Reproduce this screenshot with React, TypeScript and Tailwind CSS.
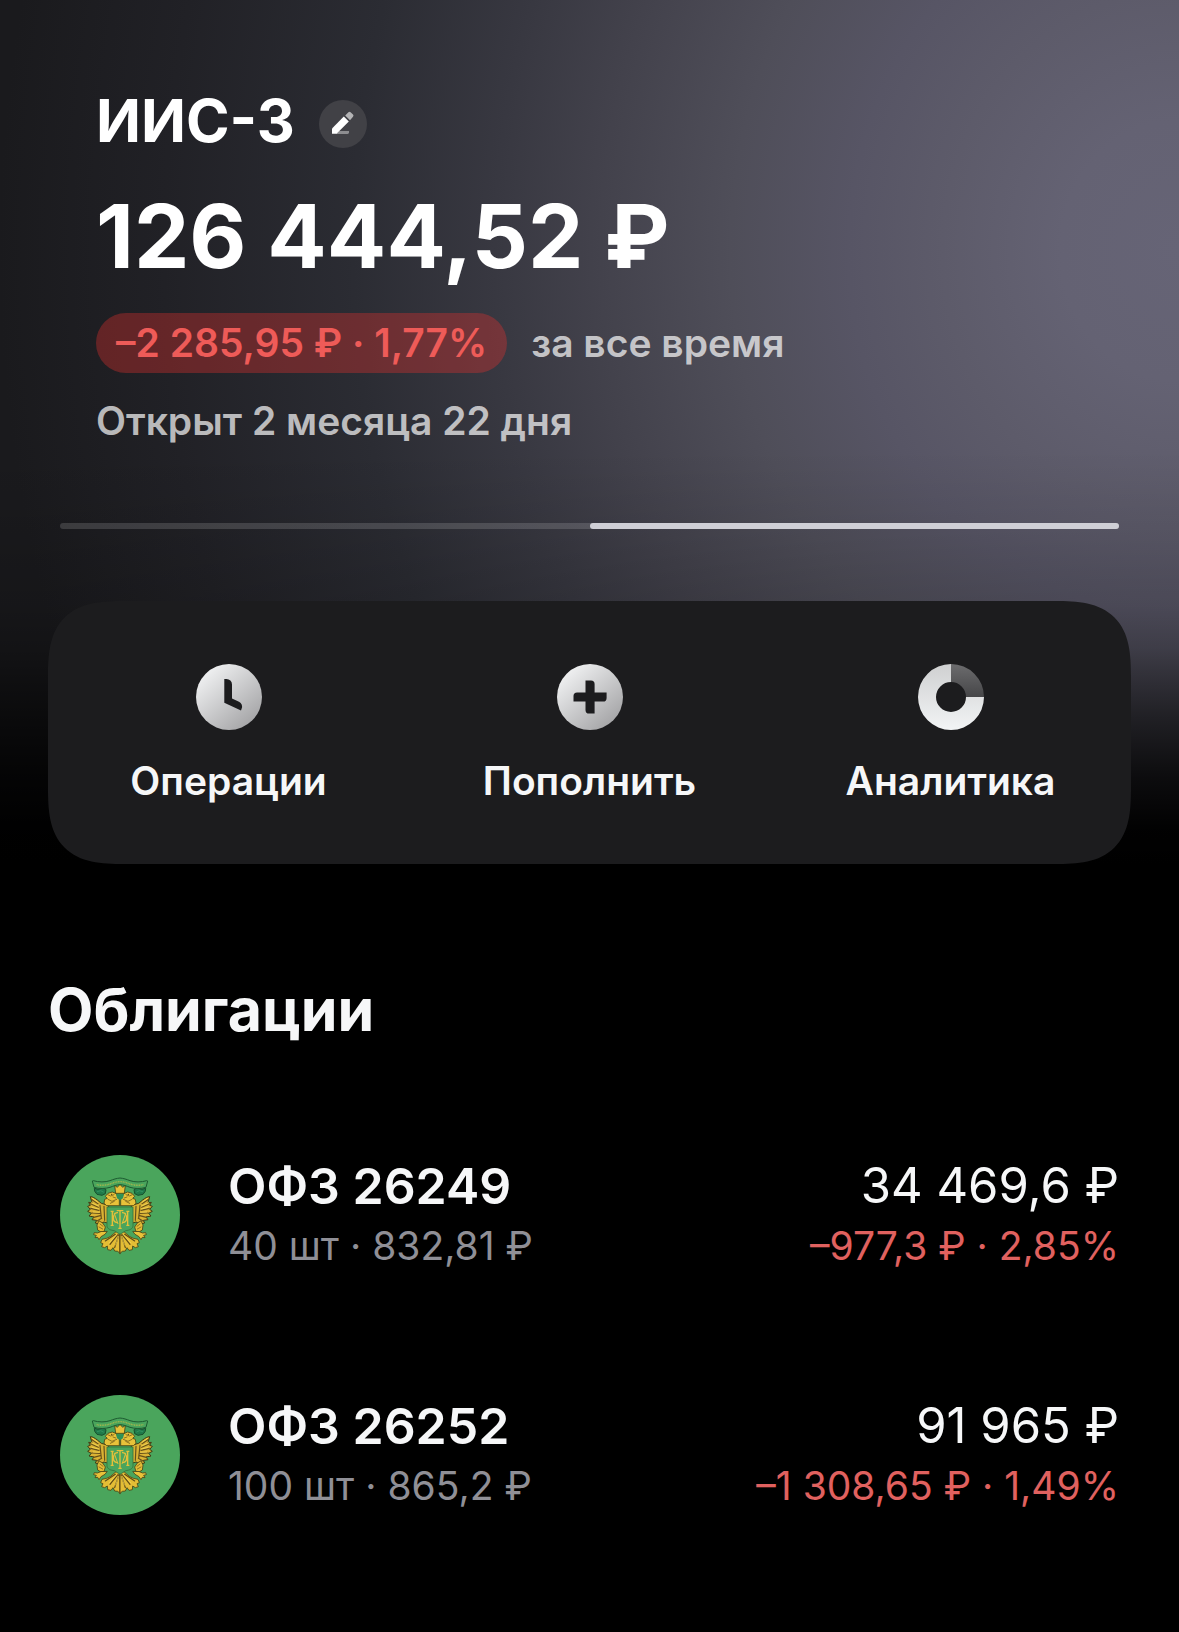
import { useId } from 'react';

type Bond = {
  name: string;
  position: string;
  total: string;
  change: string;
};

const bonds: Bond[] = [
  { name: 'ОФЗ 26249', position: '40 шт · 832,81 ₽', total: '34 469,6 ₽', change: '–977,3 ₽ · 2,85%' },
  { name: 'ОФЗ 26252', position: '100 шт · 865,2 ₽', total: '91 965 ₽', change: '–1 308,65 ₽ · 1,49%' },
];

function PencilIcon() {
  return (
    <svg viewBox="0 0 48 48" className="w-12 h-12" aria-hidden="true">
      <path d="M20 31h10v1.6a1.4 1.4 0 0 1-1.4 1.4H17z" fill="#fff" fillOpacity="0.4" />
      <path d="M24.8 16.6 29.8 21.6 17.6 33.8H13v-5.2z" fill="#fff" />
      <path d="M26.2 15.4 29.4 12.2a1.6 1.6 0 0 1 2.2 0l2.4 2.4a1.6 1.6 0 0 1 0 2.2L31 20.2z" fill="#fff" fillOpacity="0.6" />
    </svg>
  );
}

function ClockIcon() {
  const id = useId();
  return (
    <svg viewBox="0 0 66 66" className="w-16.5 h-16.5" aria-hidden="true">
      <defs>
        <linearGradient id={id} x1="0.15" y1="0.1" x2="0.85" y2="0.9">
          <stop offset="0" stopColor="#f0f1f2" />
          <stop offset="1" stopColor="#a5a5a7" />
        </linearGradient>
      </defs>
      <circle cx="33" cy="33" r="33" fill={`url(#${id})`} />
      <path d="M28.3 15h2.2a5.5 5.5 0 0 1 5.5 5.5v14l7 3.2a5.2 5.2 0 0 1 2.6 7L45 46.4l-16.7-7.6z" fill="#1c1c1e" />
    </svg>
  );
}

function PlusIcon() {
  const id = useId();
  return (
    <svg viewBox="0 0 66 66" className="w-16.5 h-16.5" aria-hidden="true">
      <defs>
        <linearGradient id={id} x1="0.15" y1="0.1" x2="0.85" y2="0.9">
          <stop offset="0" stopColor="#f0f1f2" />
          <stop offset="1" stopColor="#a5a5a7" />
        </linearGradient>
      </defs>
      <circle cx="33" cy="33" r="33" fill={`url(#${id})`} />
      <path
        d="M28.5 16.5h5.5a3.6 3.6 0 0 1 3.6 3.6v8.4h12v5.4a3.6 3.6 0 0 1-3.6 3.6h-8.4v12h-5.5a3.6 3.6 0 0 1-3.6-3.6v-8.4h-12v-5.4a3.6 3.6 0 0 1 3.6-3.6h8.4z"
        fill="#1c1c1e"
      />
    </svg>
  );
}

function ChartIcon() {
  const id = useId();
  return (
    <svg viewBox="0 0 66 66" className="w-16.5 h-16.5" aria-hidden="true">
      <defs>
        <linearGradient id={`${id}a`} x1="0" y1="0" x2="0" y2="1">
          <stop offset="0" stopColor="#cfd0d1" />
          <stop offset="1" stopColor="#f2f4f5" />
        </linearGradient>
        <linearGradient id={`${id}b`} x1="0" y1="0" x2="0" y2="1">
          <stop offset="0" stopColor="#6c6c6e" />
          <stop offset="1" stopColor="#464648" />
        </linearGradient>
      </defs>
      <path d="M33 0a33 33 0 1 0 33 33H48a15 15 0 1 1-15-15z" fill={`url(#${id}a)`} />
      <path d="M33 0a33 33 0 0 1 33 33H48a15 15 0 0 0-15-15z" fill={`url(#${id}b)`} />
    </svg>
  );
}

// Left half of the eagle, mirrored around x=210
function EagleHalf() {
  return (
    <g strokeLinejoin="round" strokeLinecap="round">
      <path d="M134 130l10 3 16-4 8 5-2 12-10 5-15-3-6-8z" fill="#1f7a4a" stroke="#174f2c" strokeWidth="3" />
      <path d="M142 140l10-3 8 4" fill="none" stroke="#3c9f6c" strokeWidth="2" />
      {/* wing */}
      <path
        d="M122 155c6 0 12 4 20 10l12 10 22 6v54l-14-4-14 6-12-3 4-8-14-2 6-8-15-3 7-8-11-6 8-6-8-9 8-3-5-9 9 1z"
        fill="#d9b233"
        stroke="#3f3a14"
        strokeWidth="3"
      />
      <path
        d="M124 163l20 13M121 176l24 11M122 190l25 6M125 204l24 1M131 217l20-5M141 228l14-8M150 181l4 38M162 184l2 42"
        fill="none"
        stroke="#66501a"
        strokeWidth="3.5"
      />
      <path d="M127 160l17 12M124 173l21 10M126 187l20 5M130 201l18 1" fill="none" stroke="#f2d655" strokeWidth="2.5" />
      {/* neck and head */}
      <path
        d="M208 182h-38l-8-7 2-12 8-3-6-6 8-9 13-4 12 5 4 8 5 6v20z"
        fill="#e8c23a"
        stroke="#4a4314"
        strokeWidth="2.5"
      />
      <path d="M173 149l9 4 10-4M174 163l12 6 14-6M181 175l12-6M189 156l8 3" fill="none" stroke="#77601b" strokeWidth="2.5" />
      <circle cx="185" cy="148" r="2" fill="#3b3513" />
      {/* leg and claw */}
      <path d="M148 228l10 6 8 12-4 14-9 1-10-6-2-14z" fill="#e3bd35" stroke="#4a4314" strokeWidth="2.5" />
      <path d="M150 237l9 7M147 246l11 6" fill="none" stroke="#80621a" strokeWidth="2.5" />
      <path d="M152 260l-10 4-9-1-2 6 8 2-4 7 8-1 4 7 6-9 12-7 6-8z" fill="#e8c23a" stroke="#4a4314" strokeWidth="2.5" />
      {/* tail */}
      <path
        d="M210 256l-14 6-14 12-12 6-14 3-4 10 7 3-4 9 9 3 8-5 1 11 10 2 6-8 5 10 9 1 7 6z"
        fill="#e3bd35"
        stroke="#4a4314"
        strokeWidth="2.5"
      />
      <path d="M204 268l-24 30M207 270l-13 38M196 268l-30 20" fill="none" stroke="#5e4a17" strokeWidth="3.5" />
      <path d="M201 268l-24 26M206 274l-9 26" fill="none" stroke="#f7dc5b" strokeWidth="2" />
    </g>
  );
}

function BondLogo() {
  return (
    <svg viewBox="30 30 360 360" className="w-30 h-30 shrink-0" aria-hidden="true">
      <circle cx="210" cy="210" r="180" fill="#4aa55c" />
      <EagleHalf />
      <g transform="matrix(-1 0 0 1 420 0)">
        <EagleHalf />
      </g>
      <path d="M210 262v62" stroke="#6e5618" strokeWidth="3" />
      {/* shield with the monogram */}
      <path d="M171 186h78v56c0 10-12 14-22 15l-17 11-17-11c-10-1-22-5-22-15z" fill="#4aa55c" stroke="#32753c" strokeWidth="2.5" />
      <g fill="none" stroke="#e3c03a" strokeWidth="4">
        <path d="M200 197h20M210 196v54M205 250h10" />
        <path d="M204 203c-16-2-20 28-2 30M216 203c16-2 20 28 2 30" />
        <path d="M187 199v41M182 199h9M182 241h9M233 199v41M229 199h9M229 241h9" strokeWidth="4" />
        <path d="M192 203l12 34M228 203l-12 34" strokeWidth="3" />
      </g>
      {/* crown and ribbon */}
      <path d="M194 121l8 6 8-9 8 9 8-6-3 24h-26z" fill="#e8c23a" stroke="#4a4314" strokeWidth="2.5" strokeLinejoin="round" />
      <path d="M198 148h24l-3 12-9 6-9-6z" fill="#2f9157" />
      <path
        d="M130 107c16 5 36 5 50 0 10-4 20-7 30-8 10 1 20 4 30 8 14 5 34 5 50 0l3 1-5 19c-16 5-34 4-48 0-11-4-20-8-30-8s-19 4-30 8c-14 4-32 5-48 0l-5-19z"
        fill="#4aa55c"
        stroke="#1c5a30"
        strokeWidth="3"
        strokeLinejoin="round"
      />
      <path d="M140 119c14 3 28 2 40-2 10-4 20-7 30-7s20 3 30 7c12 4 26 5 40 2" fill="none" stroke="#a9b84c" strokeWidth="4" strokeDasharray="3 2" />
    </svg>
  );
}

const actions = [
  { label: 'Операции', icon: <ClockIcon /> },
  { label: 'Пополнить', icon: <PlusIcon /> },
  { label: 'Аналитика', icon: <ChartIcon /> },
];

export default function App() {
  return (
    <main className="min-h-screen bg-black pb-28 font-['Inter','Noto_Sans',sans-serif] text-[#f6f7f8]">
      <section className="bg-[linear-gradient(to_bottom,transparent_52%,rgba(0,0,0,0.06)_60%,rgba(0,0,0,0.15)_70%,rgba(0,0,0,0.27)_75%,rgba(0,0,0,0.44)_79%,rgba(0,0,0,0.6)_83%,rgba(0,0,0,0.84)_90%,rgba(0,0,0,0.98)_96%,#000_100%),radial-gradient(ellipse_1180px_1300px_at_100%_29%,#666476_0%,#646273_10%,#5d5b6a_20%,#575565_28%,#4f4e59_38%,#43424c_49%,#383841_58%,#2b2c33_70%,#212126_86%,#1a1a1d_100%)]">
        <header className="px-24 pt-[94px] text-white">
          <div className="flex items-end gap-6">
            <h1 className="text-[59px] leading-[54px] font-bold">ИИС-3</h1>
            <button type="button" aria-label="Изменить название" className="rounded-full bg-[#414146]">
              <PencilIcon />
            </button>
          </div>
          <p className="mt-11 text-[88px] leading-[88px] font-bold">126 444,52 ₽</p>
          <div className="mt-[33px] flex items-center gap-6 text-[39px] leading-[60px] font-semibold">
            <span className="rounded-full bg-[#e5302f]/35 px-5 text-[#ee5b58]">–2 285,95 ₽ · 1,77%</span>
            <span className="text-white/70">за все время</span>
          </div>
          <p className="mt-6 text-[39px] leading-[48px] font-semibold text-white/70">Открыт 2 месяца 22 дня</p>
        </header>

        <div className="mx-15 mt-[78px] flex h-1.5 rounded-full bg-white/15">
          <div className="ml-auto w-1/2 rounded-full bg-[#cfcfd6]" />
        </div>

        <nav className="mx-12 mt-18 grid grid-cols-3 rounded-[76px] bg-[#1c1c1e] [corner-shape:superellipse(1.5)]">
          {actions.map((action) => (
            <button key={action.label} type="button" className="flex flex-col items-center gap-[26px] pt-[63px] pb-[58px] text-[39px] leading-[50px] font-semibold">
              {action.icon}
              {action.label}
            </button>
          ))}
        </nav>
      </section>

      <section className="mt-[113px]">
        <h2 className="px-12 text-[59px] leading-[66px] font-bold">Облигации</h2>
        <ul className="mt-[111px] flex flex-col gap-[118px] px-15">
          {bonds.map((bond) => (
            <li key={bond.name} className="flex items-center gap-12">
              <BondLogo />
              <div className="flex-1 pt-0.5">
                <h3 className="text-[50px] leading-[60px] font-semibold">{bond.name}</h3>
                <p className="text-[39px] leading-[60px] text-[#8f8f96]">{bond.position}</p>
              </div>
              <div className="pt-0.5 text-right">
                <p className="text-[49px] leading-[60px]">{bond.total}</p>
                <p className="text-[39px] leading-[60px] text-[#e0615f]">{bond.change}</p>
              </div>
            </li>
          ))}
        </ul>
      </section>
    </main>
  );
}
